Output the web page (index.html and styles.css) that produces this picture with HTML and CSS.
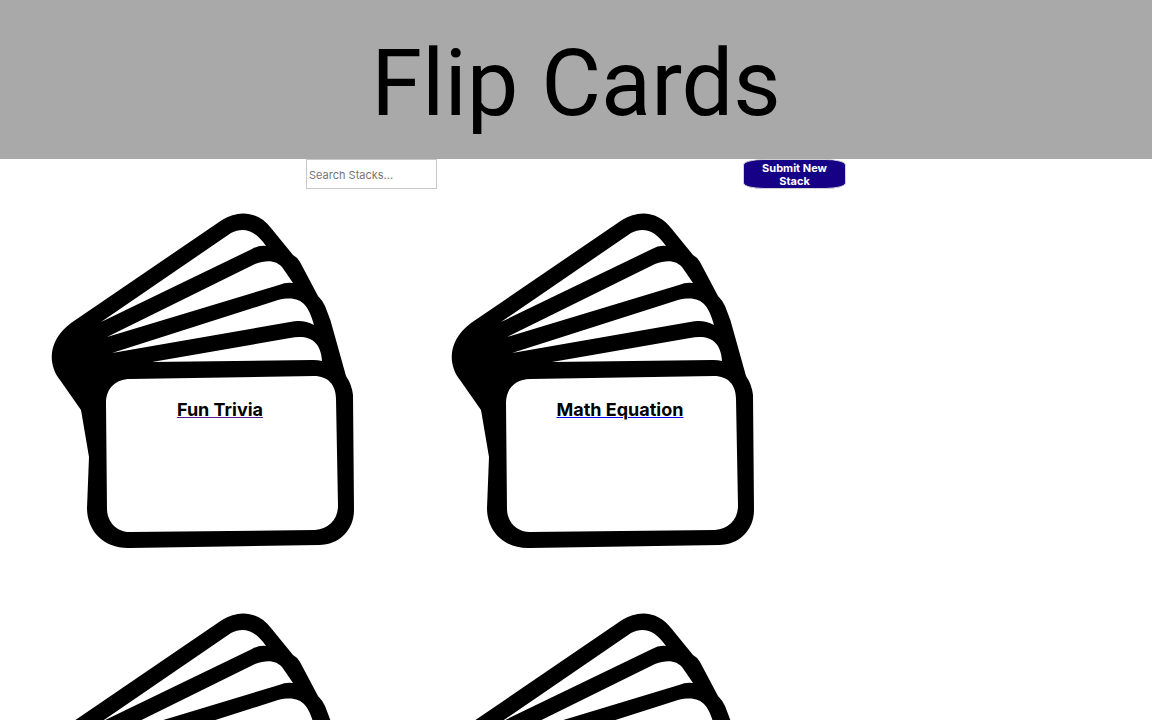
FILE: index.html
```html
<!DOCTYPE html>
<html lang="en">
<head>
<meta charset="utf-8">
<meta name="viewport" content="width=device-width, initial-scale=1">
<title>Flip Cards</title>
<link rel="stylesheet" href="styles.css">
</head>
<body>
<svg class="symbols" aria-hidden="true">
  <symbol id="cards" viewBox="20 189 400 400">
    <path fill-rule="evenodd" d="M71 323L222 220C239 209 259 212 271 228L293 255Q297 257 300 262L318 296Q323 301 325 306Q331 320 334 333L346 376Q352 385 353 395L354 510C354 530 339 545 319 545L130 548C105 549 87 532 87 508L89 457L81 410L60 380C48 365 47 341 71 323Z
    M101 322L231 233C244 226 256 231 266 246Q259 245 252 249Z
    M107 337L255 264C268 259 277 261 282 267L293 283Q286 282 279 285Z
    M112 353L278 300C300 295 308 303 314 325Q303 319 290 322Z
    M152 362L290 338C309 334 321 341 322 361Q318 360 313 360Z
    M130 379C116 379 106 388 106 403L107 510C108 524 118 532 130 532L315 530C328 529 338 520 338 506L336 399C336 385 328 376 314 376Z"/>
  </symbol>
</svg>
<header class="banner">
  <h1 class="title">Flip Cards</h1>
</header>
<nav class="toolbar">
  <input class="search" type="text" placeholder="Search Stacks..." aria-label="Search Stacks">
  <button class="submit" type="button">Submit New Stack</button>
</nav>
<main class="stacks">
  <article class="stack">
    <svg class="art" aria-hidden="true"><use href="#cards"/></svg>
    <h2 class="name"><a class="link visited" href="#fun-trivia">Fun Trivia</a></h2>
  </article>
  <article class="stack">
    <svg class="art" aria-hidden="true"><use href="#cards"/></svg>
    <h2 class="name"><a class="link" href="#math-equation">Math Equation</a></h2>
  </article>
  <article class="stack">
    <svg class="art" aria-hidden="true"><use href="#cards"/></svg>
  </article>
  <article class="stack">
    <svg class="art" aria-hidden="true"><use href="#cards"/></svg>
  </article>
</main>
</body>
</html>
```

FILE: styles.css
```css
* {
  box-sizing: border-box;
}

body {
  margin: 0;
  background: #fff;
  color: #000;
  font-family: Inter, "Liberation Sans", sans-serif;
}

.symbols {
  display: none;
}

.banner {
  padding: 26px 16px 18px;
  background: #a9a9a9;
  text-align: center;
}

.title {
  margin: 0;
  font-family: Roboto, Inter, sans-serif;
  font-size: 92px;
  font-weight: 400;
  line-height: 115px;
}

.toolbar {
  display: flex;
  justify-content: space-evenly;
}

.search,
.submit {
  height: 30px;
  font-family: inherit;
  font-size: 11px;
}

.search {
  width: 131px;
  padding: 3px 2px 1px;
  border: 1px solid #c8c8c8;
  border-radius: 0;
}

.search::placeholder {
  color: #757575;
}

.submit {
  width: 103px;
  padding: 2px 8px 0;
  border: 1px solid #d3d3d3;
  border-radius: 20%;
  background: #150086;
  color: #fff;
  font-weight: 700;
  line-height: 13px;
}

.stacks {
  display: flex;
  flex-wrap: wrap;
  padding-left: 20px;
}

.stack {
  display: grid;
  width: 400px;
}

.art,
.name {
  grid-area: 1 / 1;
}

.art {
  width: 100%;
  aspect-ratio: 1;
}

.name {
  margin: 209px 0 0;
  font-size: 18px;
  font-weight: 700;
  line-height: 24px;
  text-align: center;
}

.link {
  color: #000;
  text-decoration: underline 1px #0000ee;
}

.visited {
  text-decoration-color: #551a8b;
}
```
